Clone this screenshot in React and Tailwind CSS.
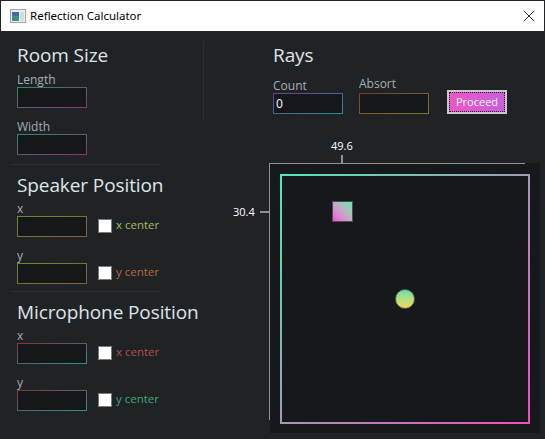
import { X } from 'lucide-react';

const border = {
  room: 'border border-solid [border-image:linear-gradient(to_bottom_right,#2f8a6c,#8f2f7c)_1]',
  speaker: 'border border-solid [border-image:linear-gradient(to_bottom_right,#6b8a2e,#8f5a36)_1]',
  mic: 'border border-solid [border-image:linear-gradient(to_bottom_right,#8f3030,#2a9490)_1]',
  count: 'border border-solid [border-image:linear-gradient(to_bottom_right,#6a3f8f,#2a8f8f)_1]',
  absort: 'border border-solid [border-image:linear-gradient(to_bottom_right,#7d3a30,#7f7a2a)_1]',
};

const Field = ({ label, tone, value, className = '' }) => (
  <div className={className}>
    <div className="h-[15px] text-[12px] leading-[15px] text-[#a9adb0]">{label}</div>
    <div className={`w-[70px] h-[21px] bg-[#15181b] pl-[2px] text-[12px] leading-[19px] text-white ${tone}`}>{value}</div>
  </div>
);

const PositionRow = ({ label, tone, centerLabel, centerColor, className = '' }) => (
  <div className={`flex items-end ${className}`}>
    <Field label={label} tone={tone} />
    <div className="flex items-center h-[20px] mb-px ml-[11px]">
      <span className="w-[14px] h-[14px] bg-white border border-[#7a7a7a]" />
      <span className={`ml-[4px] mb-[2px] text-[11.5px] leading-[14px] ${centerColor}`}>{centerLabel}</span>
    </div>
  </div>
);

const Heading = ({ children }) => (
  <h2 className="text-[19px] leading-[24px] pb-[2px] text-[#dfe3e6] whitespace-nowrap tracking-[-0.1px]">{children}</h2>
);

export default function App() {
  return (
    <div className="w-[545px] h-[439px] overflow-hidden bg-[#1f2326] pt-px px-px font-['Open_Sans','Liberation_Sans',sans-serif]">
      {/* Title bar */}
      <div className="flex items-center h-[30px] bg-white pl-[9px] pr-[5px]">
        <svg width="16" height="14" viewBox="0 0 16 14" className="shrink-0">
          <rect x="0.5" y="0.5" width="15" height="13" fill="#e9eef0" stroke="#a3a8ab" />
          <rect x="2" y="3" width="7" height="9" fill="#3f8f86" />
          <rect x="2" y="3" width="7" height="4" fill="#3d6f9c" />
          <rect x="10" y="3" width="4" height="9" fill="#cfdedb" />
        </svg>
        <span className="ml-[4px] text-[11.5px] text-black whitespace-nowrap font-['Noto_Sans',sans-serif]">Reflection Calculator</span>
        <X size={20} strokeWidth={1} className="ml-auto text-black" />
      </div>

      <div className="relative flex">
        {/* Left column */}
        <div className="w-[202px] shrink-0 pt-[12px]">
          <div className="pl-[16px]">
            <Heading>Room Size</Heading>
            <Field label="Length" tone={border.room} className="mt-[3px]" />
            <Field label="Width" tone={border.room} className="mt-[11px]" />
          </div>
          <div className="h-px w-[150px] ml-[10px] mt-[9px] bg-[#2a2e31]" />
          <div className="pl-[16px] pt-[8px]">
            <Heading>Speaker Position</Heading>
            <PositionRow label="x" tone={border.speaker} centerLabel="x center" centerColor="text-[#a8bc5c]" className="mt-[2px]" />
            <PositionRow label="y" tone={border.speaker} centerLabel="y center" centerColor="text-[#b8673f]" className="mt-[11px]" />
          </div>
          <div className="h-px w-[150px] ml-[10px] mt-[7px] bg-[#2a2e31]" />
          <div className="pl-[16px] pt-[8px]">
            <Heading>Microphone Position</Heading>
            <PositionRow label="x" tone={border.mic} centerLabel="x center" centerColor="text-[#b84c4c]" className="mt-[2px]" />
            <PositionRow label="y" tone={border.mic} centerLabel="y center" centerColor="text-[#3fa873]" className="mt-[11px]" />
          </div>
        </div>

        {/* Divider */}
        <div className="w-px h-[80px] mt-[10px] bg-[#2a2e31] shrink-0" />

        {/* Right column */}
        <div className="flex-1 pl-[69px] pt-[12px]">
          <Heading>Rays</Heading>
          <div className="flex items-end mt-[9px]">
            <Field label="Count" tone={border.count} value="0" />
            <Field label="Absort" tone={border.absort} className="ml-[16px] -mt-[2px] [&>div:first-child]:mb-[2px]" />
            <button className="ml-[18px] w-[60px] h-[24px] p-[2px] bg-[#c8c8c8]">
              <span className="flex items-center justify-center h-full border border-dotted border-[#2a1030] bg-linear-to-r from-[#ec55c4] to-[#c95fdc] text-[11px] text-white">
                Proceed
              </span>
            </button>
          </div>

          {/* Canvas */}
          <div className="relative w-[270px] h-[270px] mt-[49px] -ml-[3px] bg-[#16191c]">
            <div className="absolute left-[-1px] top-0 w-[256px] h-px bg-[#8f9194]" />
            <div className="absolute left-[-1px] top-0 w-px h-[257px] bg-[#8f9194]" />
            <div className="absolute left-[71px] -top-[8px] w-[2px] h-[8px] bg-[#8f9194]" />
            <div className="absolute left-[-10px] top-[48px] w-[9px] h-[2px] bg-[#8f9194]" />
            <span className="absolute left-[61px] -top-[25px] text-[11px] leading-[16px] text-white">49.6</span>
            <span className="absolute left-[-37px] top-[41px] text-[11px] leading-[16px] text-white">30.4</span>
            <div className="absolute left-[10px] top-[11px] w-[250px] h-[250px] border-2 border-solid [border-image:linear-gradient(135deg,#52e8ae,#f24cc0)_1]" />
            <div className="absolute left-[62px] top-[38px] w-[21px] h-[21px] border border-[#4a4d50] bg-linear-to-tr from-[#f24cd8] to-[#52e8ae]" />
            <div className="absolute left-[125px] top-[126px] w-[20px] h-[20px] rounded-full border border-[#55585a] bg-linear-to-b from-[#55e2a8] to-[#f2d84a]" />
          </div>
        </div>
      </div>
    </div>
  );
}
